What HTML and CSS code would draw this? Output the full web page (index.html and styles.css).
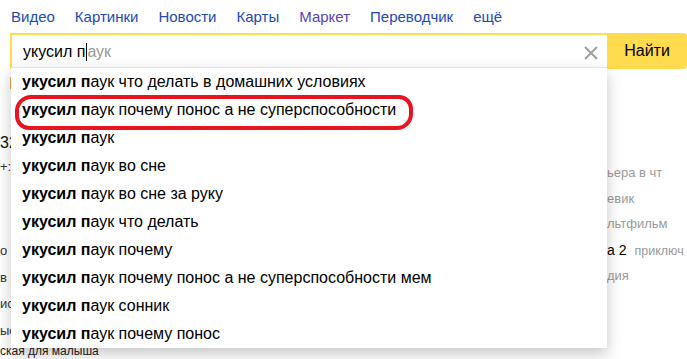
FILE: index.html
```html
<!DOCTYPE html>
<html>
<head>
    <meta charset="utf-8">
    <title>укусил паук — Яндекс</title>
    <link rel="stylesheet" href="styles.css">
</head>
<body>
<div class="page">
    <nav class="nav">
        <a href="#">Видео</a>
        <a href="#">Картинки</a>
        <a href="#">Новости</a>
        <a href="#">Карты</a>
        <a href="#" class="visited">Маркет</a>
        <a href="#">Переводчик</a>
        <a href="#" class="more">ещё</a>
    </nav>

    <div class="search">
        <div class="search-input">
            <span class="typed">укусил п</span><span class="caret"></span><span class="hint">аук</span>
            <span class="clear">
                <svg width="14" height="14" viewBox="0 0 14 14"><path d="M1 1L13 13M13 1L1 13" stroke="#9e9e9e" stroke-width="2" fill="none"/></svg>
            </span>
        </div>
        <span class="search-btn">Найти</span>

        <ul class="suggest">
            <li><b>укусил п</b>аук что делать в домашних условиях</li>
            <li><b>укусил п</b>аук почему понос а не суперспособности</li>
            <li><b>укусил п</b>аук</li>
            <li><b>укусил п</b>аук во сне</li>
            <li><b>укусил п</b>аук во сне за руку</li>
            <li><b>укусил п</b>аук что делать</li>
            <li><b>укусил п</b>аук почему</li>
            <li><b>укусил п</b>аук почему понос а не суперспособности мем</li>
            <li><b>укусил п</b>аук сонник</li>
            <li><b>укусил п</b>аук почему понос</li>
            <span class="mark"></span>
        </ul>
    </div>

    <div class="content">
        <div class="left">
            <span class="orange"></span>
            <div class="num">32</div>
            <div class="small">+:</div>
            <div class="row first">о</div>
            <div class="row">в К</div>
            <div class="row">ист</div>
            <div class="row">ые</div>
            <div class="last">ская для малыша</div>
        </div>
        <div class="right">
            <div class="line">ьера в чт</div>
            <div class="line">евик</div>
            <div class="line">льтфильм</div>
            <div class="line"><span class="dark">а 2</span><span class="tag">приключ</span></div>
            <div class="line">дия</div>
        </div>
    </div>
</div>
</body>
</html>
```

FILE: styles.css
```css
html, body {
    margin: 0;
    padding: 0;
    background: #fff;
}

body {
    width: 687px;
    height: 359px;
    overflow: hidden;
    font: 16px/1.2 "Liberation Sans", Arial, sans-serif;
    color: #000;
}

a, a:visited {
    text-decoration: none;
}

ul, li {
    margin: 0;
    padding: 0;
    list-style: none;
}

.nav {
    display: flex;
    gap: 20px;
    height: 33px;
    padding-left: 11px;
    align-items: center;
    font-size: 15px;
}

.nav a {
    color: #2149b8;
}

.nav a.visited {
    color: #5b3fb6;
}

.search {
    position: relative;
    display: flex;
    margin-left: 10px;
    height: 36px;
}

.search-input {
    flex: 1;
    display: flex;
    align-items: center;
    padding-left: 11px;
    border-top: 2px solid #ffdb4d;
    border-left: 2px solid #ffdb4d;
    font-size: 16px;
}

.typed {
    color: #000;
}

.caret {
    width: 1px;
    height: 18px;
    margin-left: 1px;
    background: #000;
}

.hint {
    color: #999;
}

.clear {
    display: flex;
    margin-left: auto;
    margin-right: 9px;
    margin-top: 1px;
}

.search-btn {
    display: flex;
    align-items: center;
    justify-content: center;
    width: 80px;
    background: #ffdb4d;
    border-radius: 0 4px 4px 0;
    font-size: 16px;
    color: #000;
}

.suggest {
    position: absolute;
    top: 34px;
    left: 1px;
    width: 596px;
    background: #fff;
    border-top: 1px solid #e3e3e3;
    box-shadow: 0 6px 14px rgba(0, 0, 0, .22);
    z-index: 2;
}

.suggest li {
    height: 28px;
    line-height: 28px;
    padding-left: 11px;
    font-size: 16px;
    color: #000;
    white-space: nowrap;
}

.suggest b {
    font-weight: bold;
}

.mark {
    position: absolute;
    left: 4px;
    top: 27px;
    width: 390px;
    height: 27px;
    border: 4px solid #e8141f;
    border-radius: 16px 14px 16px 14px;
}

.content {
    display: flex;
    justify-content: space-between;
}

.left {
    position: relative;
    width: 12px;
    white-space: nowrap;
    color: #333;
    font-size: 13px;
}

.orange {
    position: absolute;
    left: 10px;
    top: 8px;
    width: 2px;
    height: 12px;
    background: #f0a050;
}

.num {
    margin-top: 60px;
    height: 28px;
    line-height: 28px;
    font-size: 16px;
    color: #111;
}

.small {
    height: 20px;
    line-height: 20px;
    font-size: 13px;
    color: #333;
}

.row {
    height: 26.5px;
    line-height: 26px;
}

.row.first {
    margin-top: 61px;
}

.last {
    margin-top: -2px;
    font-size: 12px;
    line-height: 18px;
    color: #222;
}

.right {
    width: 80px;
    padding-top: 91px;
    color: #999;
    font-size: 13px;
    white-space: nowrap;
}

.line {
    height: 25.7px;
    line-height: 26px;
}

.dark {
    color: #000;
    font-size: 14px;
}

.tag {
    margin-left: 8px;
    font-size: 12.5px;
}
```
